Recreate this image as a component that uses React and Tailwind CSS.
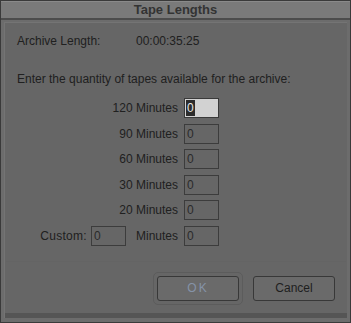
import React from "react";

const rows = ["120", "90", "60", "30", "20"];

const font = { fontFamily: "'Liberation Sans', Arial, sans-serif" };

const Field = ({ focused }) =>
  focused ? (
    <div className="w-[35px] h-[20px] border border-[#3a3a3a] bg-[#d2d2d2] flex items-center pl-[1px]">
      <span className="bg-[#2c2c2c] text-[#e8e8e8] text-[12px] leading-[16px] px-[1px]">0</span>
    </div>
  ) : (
    <div className="w-[35px] h-[20px] border border-[#3c3c3c] bg-[#666666] flex items-center pl-[2px] text-[12px] text-[#2a2a2a]">
      0
    </div>
  );

export default function App() {
  return (
    <div
      className="w-[351px] h-[323px] bg-[#3a3a3a] p-px flex flex-col text-[#202020]"
      style={font}
    >
      {/* Title bar */}
      <div className="h-[17px] bg-[#7a7a7a] border-t border-[#8a8a8a] flex items-center justify-center text-[13px] font-bold text-[#333333]">
        Tape Lengths
      </div>
      <div className="h-[2px] bg-[#4c4c4c]" />

      {/* Body */}
      <div className="flex-1 bg-[#6c6c6c] px-[3px] pt-[2px] pb-[4px] flex flex-col">
        <div className="flex-1 bg-[#666666] border-t border-l border-[#747474] flex flex-col">
          <div className="flex text-[12px] pl-[12px] pt-[11px] leading-[14px]">
            <span className="w-[119px]">Archive Length:</span>
            <span>00:00:35:25</span>
          </div>

          <div className="text-[12px] pl-[12px] mt-[24px] leading-[14px]">
            Enter the quantity of tapes available for the archive:
          </div>

          <div className="flex flex-col gap-[5.6px] mt-[12px] text-[12px]">
            {rows.map((m, i) => (
              <div key={m} className="flex items-center h-[20px]">
                <div className="w-[179px] text-right pr-[6px]">{m} Minutes</div>
                <Field focused={i === 0} />
              </div>
            ))}
            <div className="flex items-center h-[20px]">
              <div className="w-[179px] flex items-center justify-end pr-[6px]">
                <span className="mr-[4px] tracking-[0.3px]">Custom:</span>
                <Field />
                <span className="ml-[10px]">Minutes</span>
              </div>
              <Field />
            </div>
          </div>

          <div className="mt-[15px] mx-[1px] h-px bg-[#646464]" />

          <div className="flex justify-end items-center gap-[10px] pr-[12px] mt-[10px]">
            <div className="rounded-[5px] border border-[#5c5c5c] p-[3px]">
              <div className="w-[82px] h-[25px] rounded-[3px] border border-[#383838] bg-[#6a6a6a] flex items-center justify-center text-[12px] text-[#8593a8] tracking-[2px]">
                OK
              </div>
            </div>
            <div className="w-[82px] h-[25px] rounded-[3px] border border-[#383838] bg-[#6a6a6a] flex items-center justify-center text-[12px] text-[#1e1e1e]">
              Cancel
            </div>
          </div>

          <div className="mt-auto h-[5px] bg-[#555555]" />
        </div>
      </div>
    </div>
  );
}
